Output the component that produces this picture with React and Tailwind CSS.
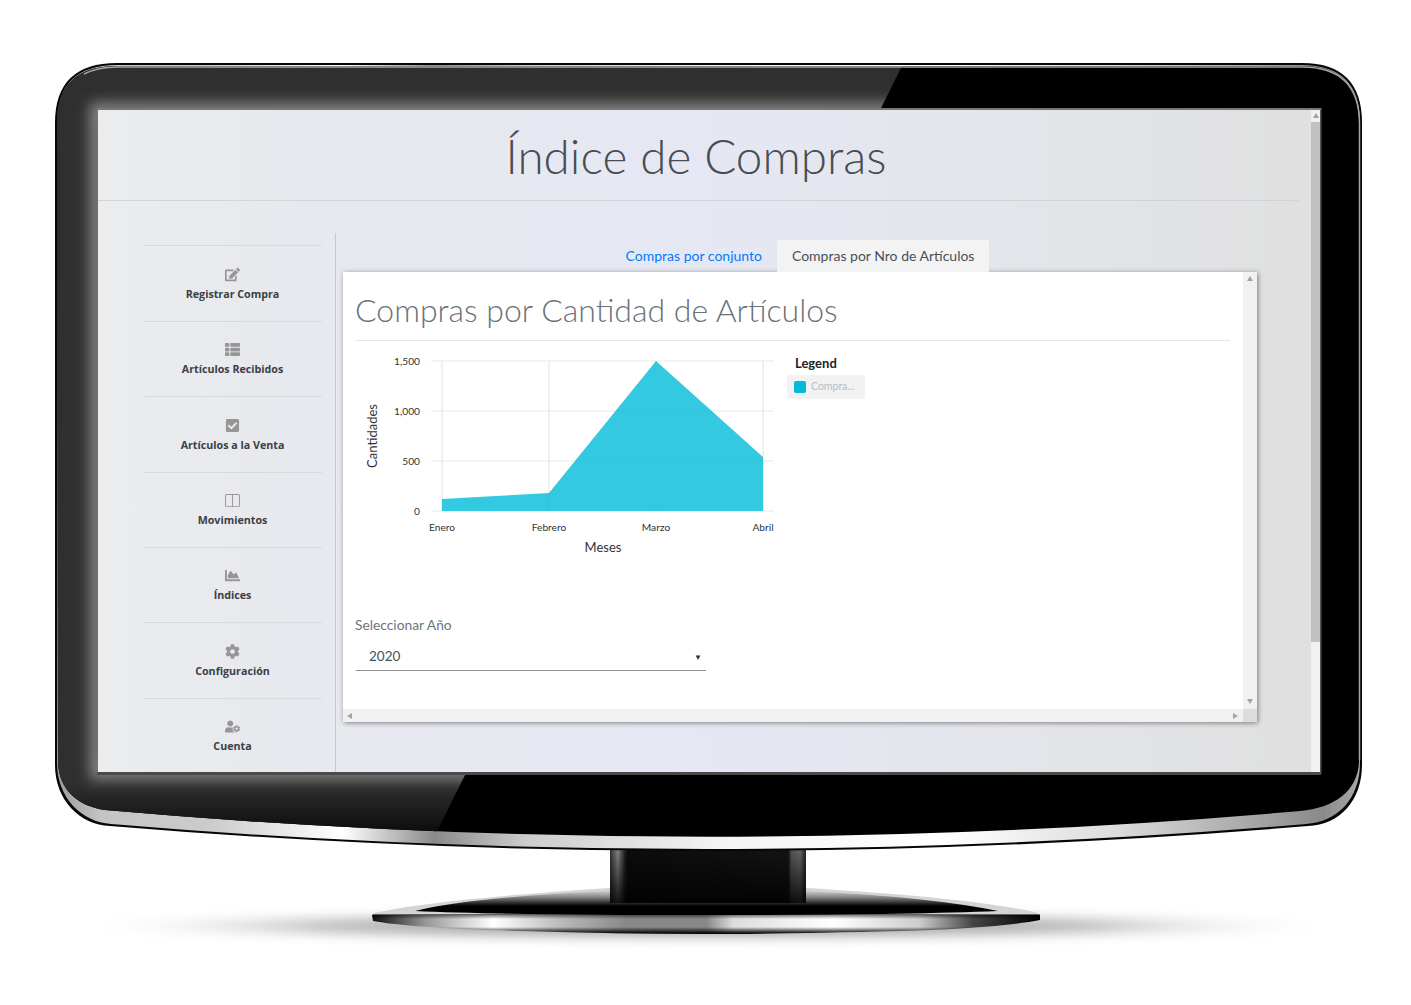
import { FaEdit, FaThList, FaCheckSquare, FaChartArea, FaCog, FaUserCog } from "react-icons/fa";
import { BsLayoutSplit } from "react-icons/bs";

const menu = [
  { label: "Registrar Compra", icon: FaEdit },
  { label: "Artículos Recibidos", icon: FaThList },
  { label: "Artículos a la Venta", icon: FaCheckSquare },
  { label: "Movimientos", icon: BsLayoutSplit },
  { label: "Índices", icon: FaChartArea },
  { label: "Configuración", icon: FaCog },
  { label: "Cuenta", icon: FaUserCog },
];

const outer = "M55,123 Q55,63 117,63 L1302,63 Q1362,63 1362,123 L1362,765 C1362,800 1340,825 1308,826 Q706,876 110,826 C80,825 55,800 55,765 Z";
const chrome = "M57,123 Q57,65 117,65 L1302,65 Q1360,65 1360,123 L1360,763 C1360,798 1338,822 1306,824 Q706,874 111,824 C82,822 57,798 57,763 Z";
const bezel = "M57,123 Q57,66 117,66 L1302,66 Q1359,66 1359,123 L1359,760 C1359,790 1335,808 1300,811 Q706,863 105,810 C78,806 58,790 58,760 Z";
const base = "M372,915 Q374,912 385,911 Q440,899 610,888 L806,888 Q960,897 1030,911 Q1040,913 1040,915 L1040,920 Q1000,928 900,931 Q780,934 706,934 Q620,934 520,931 Q410,928 373,921 Z";

function Monitor() {
  return (
    <svg className="absolute inset-0" width="1411" height="1005" viewBox="0 0 1411 1005">
      <defs>
        <linearGradient id="chrome" gradientUnits="userSpaceOnUse" x1="55" y1="0" x2="1362" y2="0">
          <stop offset="0" stopColor="#999" />
          <stop offset="0.035" stopColor="#c4c4c4" />
          <stop offset="0.12" stopColor="#ccc" />
          <stop offset="0.22" stopColor="#fff" />
          <stop offset="0.29" stopColor="#8a8a8a" />
          <stop offset="0.36" stopColor="#ccc" />
          <stop offset="0.51" stopColor="#f4f4f4" />
          <stop offset="0.68" stopColor="#fff" />
          <stop offset="0.81" stopColor="#ddd" />
          <stop offset="0.91" stopColor="#aaa" />
          <stop offset="0.97" stopColor="#8a8a8a" />
          <stop offset="1" stopColor="#aaa" />
        </linearGradient>
        <linearGradient id="stem" gradientUnits="userSpaceOnUse" x1="610" y1="0" x2="806" y2="0">
          <stop offset="0" stopColor="#333" />
          <stop offset="0.04" stopColor="#888" />
          <stop offset="0.075" stopColor="#222" />
          <stop offset="0.09" stopColor="#0c0c0c" />
          <stop offset="0.91" stopColor="#141414" />
          <stop offset="0.925" stopColor="#555" />
          <stop offset="0.97" stopColor="#666" />
          <stop offset="1" stopColor="#222" />
        </linearGradient>
        <linearGradient id="stemShade" x1="0" y1="0" x2="0" y2="1">
          <stop offset="0" stopColor="#000" stopOpacity="0" />
          <stop offset="1" stopColor="#000" stopOpacity="0.85" />
        </linearGradient>
        <linearGradient id="baseTop" gradientUnits="userSpaceOnUse" x1="0" y1="889" x2="0" y2="906">
          <stop offset="0" stopColor="#e2e2e2" />
          <stop offset="0.45" stopColor="#8c8c8c" />
          <stop offset="1" stopColor="#000" />
        </linearGradient>
        <linearGradient id="baseRim" gradientUnits="userSpaceOnUse" x1="373" y1="0" x2="1040" y2="0">
          <stop offset="0" stopColor="#111" />
          <stop offset="0.08" stopColor="#999" />
          <stop offset="0.18" stopColor="#fff" />
          <stop offset="0.28" stopColor="#bbb" />
          <stop offset="0.38" stopColor="#888" />
          <stop offset="0.5" stopColor="#888" />
          <stop offset="0.54" stopColor="#ddd" />
          <stop offset="0.69" stopColor="#fff" />
          <stop offset="0.82" stopColor="#ccc" />
          <stop offset="0.9" stopColor="#444" />
          <stop offset="1" stopColor="#000" />
        </linearGradient>
        <linearGradient id="rimShade" gradientUnits="userSpaceOnUse" x1="0" y1="914" x2="0" y2="934">
          <stop offset="0" stopColor="#000" stopOpacity="0.6" />
          <stop offset="0.25" stopColor="#000" stopOpacity="0" />
          <stop offset="0.65" stopColor="#000" stopOpacity="0" />
          <stop offset="0.92" stopColor="#000" stopOpacity="0.85" />
          <stop offset="1" stopColor="#000" />
        </linearGradient>
        <linearGradient id="bottomShade" gradientUnits="userSpaceOnUse" x1="0" y1="785" x2="0" y2="838">
          <stop offset="0" stopColor="#000" stopOpacity="0" />
          <stop offset="1" stopColor="#000" stopOpacity="0.85" />
        </linearGradient>
        <radialGradient id="shadow">
          <stop offset="0" stopColor="#8f8f8f" />
          <stop offset="0.6" stopColor="#b5b5b5" />
          <stop offset="1" stopColor="#fff" stopOpacity="0" />
        </radialGradient>
        <filter id="soft" x="-10%" y="-200%" width="120%" height="500%">
          <feGaussianBlur stdDeviation="6" />
        </filter>
        <filter id="glow" x="-10%" y="-10%" width="120%" height="120%">
          <feGaussianBlur stdDeviation="7" />
        </filter>
        <clipPath id="bezelClip">
          <path d={bezel} />
        </clipPath>
        <clipPath id="reflection">
          <polygon points="50,60 905,60 880,110 98,110 98,775 465,775 430,845 50,845" />
        </clipPath>
        <clipPath id="baseClip">
          <path d={base} />
        </clipPath>
      </defs>

      <ellipse cx="706" cy="926" rx="650" ry="15" fill="url(#shadow)" filter="url(#soft)" />

      <path d={base} fill="#d4d4d4" />
      <g clipPath="url(#baseClip)">
        <rect x="370" y="915" width="675" height="20" fill="url(#baseRim)" />
        <rect x="370" y="914" width="675" height="21" fill="url(#rimShade)" />
        <path d="M415,911 Q470,897 612,891 L806,891 Q930,897 998,911 Q900,915 706,915 Q500,915 415,911 Z" fill="url(#baseTop)" />
      </g>
      <rect x="610" y="848" width="196" height="55" fill="url(#stem)" />
      <rect x="610" y="848" width="196" height="55" fill="url(#stemShade)" />

      <path d={outer} fill="#060606" />
      <path d={chrome} fill="url(#chrome)" />
      <path d={bezel} fill="#000" />
      <g clipPath="url(#bezelClip)">
        <g clipPath="url(#reflection)">
          <rect x="50" y="60" width="860" height="790" fill="#2f2f2f" />
          <rect x="97" y="110" width="1000" height="662" fill="none" stroke="#8a8a8a" strokeWidth="14" filter="url(#glow)" />
          <rect x="50" y="785" width="420" height="60" fill="url(#bottomShade)" />
        </g>
      </g>
      <path d="M84,74 Q98,67 117,67 L1302,67 Q1359,67 1359.5,123 L1359.5,760" fill="none" stroke="#a5a5a5" strokeWidth="1.5" />
      <rect x="97" y="772" width="1224" height="3" fill="#4a4a4a" />
      <rect x="1320" y="108" width="1.5" height="666" fill="#555" />
      <rect x="97" y="108" width="1224" height="2" fill="#777" />
    </svg>
  );
}

function AreaChart() {
  const labelClass = "fill-[#333] text-[10.2px]";
  return (
    <svg width="424" height="210" viewBox="356 350 424 210" className="shrink-0">
      {[361, 411, 461, 511].map((y) => (
        <line key={y} x1="431" x2="774" y1={y} y2={y} stroke="#e9e9e9" />
      ))}
      {[442, 549, 656, 763].map((x) => (
        <line key={x} x1={x} x2={x} y1="361" y2="511" stroke="#e2e2e2" />
      ))}
      <polygon points="442,499 549,493 656,361 763,457 763,511 442,511" fill="#00bcd9" fillOpacity="0.8" />
      {[["1,500", 364.5], ["1,000", 414.5], ["500", 464.5], ["0", 514.5]].map(([t, y]) => (
        <text key={t} x="420" y={y} textAnchor="end" className={labelClass}>{t}</text>
      ))}
      {[["Enero", 442], ["Febrero", 549], ["Marzo", 656], ["Abril", 763]].map(([t, x]) => (
        <text key={t} x={x} y="531" textAnchor="middle" className={labelClass}>{t}</text>
      ))}
      <text x="603" y="552" textAnchor="middle" className="fill-[#333] text-[13px]">Meses</text>
      <text transform="translate(377 436) rotate(-90)" textAnchor="middle" className="fill-[#333] text-[13px]">Cantidades</text>
    </svg>
  );
}

function Triangle({ dir }) {
  const points = { up: "0,5 3,0 6,5", down: "0,0 3,5 6,0", left: "5,0 0,3 5,6", right: "0,0 5,3 0,6" }[dir];
  return (
    <svg width="6" height="6" viewBox="0 0 6 6">
      <polygon points={points} fill="#a3a3a3" />
    </svg>
  );
}

export default function App() {
  return (
    <div className="relative w-[1411px] h-[1005px] bg-white overflow-hidden font-['Lato',sans-serif]">
      <Monitor />

      <div className="absolute left-[98px] top-[110px] w-[1222px] h-[662px] flex overflow-hidden bg-[linear-gradient(90deg,#ebecec_0%,#e8e9ee_15%,#e5e8f3_50%,#e3e5ea_75%,#e0e0e0_100%)]">
        <div className="flex-1 min-w-0">
          <header className="w-[1201px] h-[91px] border-b border-[#d2d3d6] flex items-center justify-center pr-[5px] pt-[2px]">
            <h1 className="text-[47.6px] font-light text-[#474d53] leading-none">Índice de Compras</h1>
          </header>

          <div className="flex mt-[32px]">
            <aside className="w-[238px] h-[540px] shrink-0 border-r border-[#c6c7ca] pl-[46px] pr-[13px] pt-[12.4px]">
              {menu.map(({ label, icon: Icon }) => (
                <div key={label} className="h-[75.4px] border-t border-[#d9dadd] flex flex-col items-center pt-[20.5px] pr-[1px]">
                  <Icon className="text-[#969696] text-[15px]" />
                  <span className="mt-[5px] text-[10.7px] leading-[14px] font-bold text-[#3a4046] font-['Open_Sans',sans-serif]">{label}</span>
                </div>
              ))}
            </aside>

            <main className="ml-[7px] w-[914px]">
              <nav className="flex justify-center mt-[7px] h-[32px] text-[14px] leading-[20px]">
                <a className="px-[15px] pb-[1px] flex items-center text-[#007bff]">Compras por conjunto</a>
                <a className="px-[15px] pb-[1px] flex items-center bg-[#f3f3f4] text-[#495057] rounded-t-[2px]">Compras por Nro de Artículos</a>
              </nav>

              <section className="h-[450px] bg-white flex flex-col shadow-[1px_1px_5px_rgba(0,0,0,0.45)]">
                <div className="flex flex-1 min-h-0">
                  <div className="flex-1 min-w-0 px-[13px]">
                    <h2 className="h-[69px] -ml-[1px] border-b border-[#e6e6e6] flex items-center text-[32px] font-light text-[#6a7279] pt-[8px]">Compras por Cantidad de Artículos</h2>
                    <div className="flex mt-[9px]">
                      <AreaChart />
                      <div className="ml-[7px] w-[78px]">
                        <div className="mt-[5px] pl-[8px] text-[13px] leading-[17px] font-bold text-[#222]">Legend</div>
                        <div className="mt-[3px] h-[24px] bg-[#f2f2f2] rounded-[2px] flex items-center pl-[7px] gap-[5px]">
                          <span className="w-[12px] h-[12px] rounded-[2px] bg-[#00bcd9]" />
                          <span className="text-[10.5px] text-[#b9bcc6]">Compra...</span>
                        </div>
                      </div>
                    </div>
                    <div className="mt-[56px] w-[350px]">
                      <label className="block -ml-[1px] text-[13.8px] leading-[18px] text-[#6c757d]">Seleccionar Año</label>
                      <div className="mt-[4px] h-[33px] pt-[5px] border-b border-[#8f8f8f] flex items-center justify-between pl-[13px] pr-[4px] text-[13.5px] text-[#495057]">
                        <span>2020</span>
                        <span className="text-[8px] text-[#333]">▼</span>
                      </div>
                    </div>
                  </div>
                  <div className="w-[14px] bg-[#f1f1f1] flex flex-col items-center justify-between py-[4px]">
                    <Triangle dir="up" />
                    <Triangle dir="down" />
                  </div>
                </div>
                <div className="h-[13px] flex">
                  <div className="flex-1 bg-[#f1f1f1] flex items-center justify-between px-[4px]">
                    <Triangle dir="left" />
                    <Triangle dir="right" />
                  </div>
                  <div className="w-[14px] bg-[#dcdcdc]" />
                </div>
              </section>
            </main>
          </div>
        </div>

        <div className="w-[9px] bg-[#f1f1f1] flex flex-col">
          <div className="h-[12px] flex items-center justify-center">
            <Triangle dir="up" />
          </div>
          <div className="h-[520px] bg-[#c1c1c1]" />
        </div>
      </div>
    </div>
  );
}
